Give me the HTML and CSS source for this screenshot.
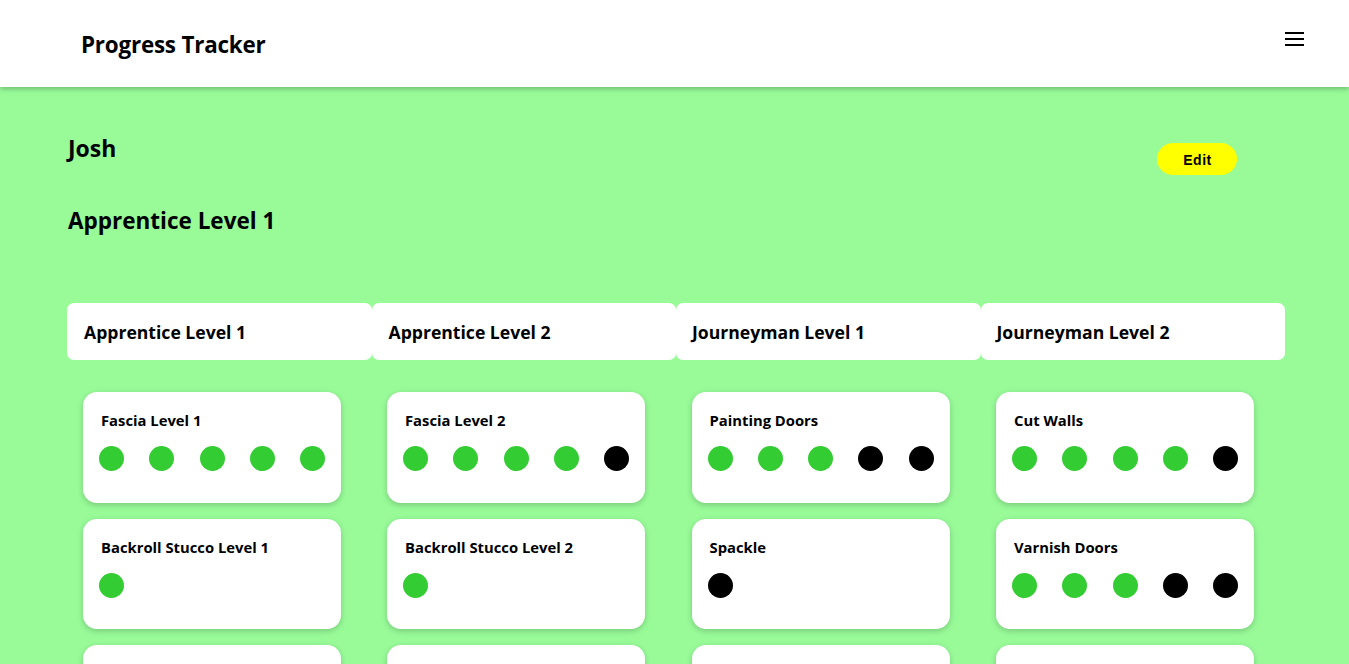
FILE: index.html
```html
<!DOCTYPE html>
<html>
<head>
<meta charset="utf-8">
<link rel="stylesheet" href="styles.css">
</head>
<body>
<header class="topbar">
  <div class="brand">Progress Tracker</div>
  <button class="menu" aria-label="menu">
    <svg width="20" height="16" viewBox="0 0 20 16"><rect x="0" y="1" width="19" height="2" fill="#000"/><rect x="0" y="7" width="19" height="2" fill="#000"/><rect x="0" y="13" width="19" height="2" fill="#000"/></svg>
  </button>
</header>
<main class="page">
  <div class="profile">
    <div class="profile-info">
      <h2 class="name">Josh</h2>
      <h2 class="level">Apprentice Level 1</h2>
    </div>
    <button class="edit">Edit</button>
  </div>
  <div class="tabs">
    <div class="tab">Apprentice Level 1</div>
    <div class="tab">Apprentice Level 2</div>
    <div class="tab">Journeyman Level 1</div>
    <div class="tab">Journeyman Level 2</div>
  </div>
  <div class="columns">
    <div class="column">
      <div class="card"><div class="card-title">Fascia Level 1</div><div class="dots"><span class="dot on"></span><span class="dot on"></span><span class="dot on"></span><span class="dot on"></span><span class="dot on"></span></div></div>
      <div class="card"><div class="card-title">Backroll Stucco Level 1</div><div class="dots"><span class="dot on"></span></div></div>
      <div class="card"><div class="card-title">&nbsp;</div><div class="dots"></div></div>
    </div>
    <div class="column">
      <div class="card"><div class="card-title">Fascia Level 2</div><div class="dots"><span class="dot on"></span><span class="dot on"></span><span class="dot on"></span><span class="dot on"></span><span class="dot"></span></div></div>
      <div class="card"><div class="card-title">Backroll Stucco Level 2</div><div class="dots"><span class="dot on"></span></div></div>
      <div class="card"><div class="card-title">&nbsp;</div><div class="dots"></div></div>
    </div>
    <div class="column">
      <div class="card"><div class="card-title">Painting Doors</div><div class="dots"><span class="dot on"></span><span class="dot on"></span><span class="dot on"></span><span class="dot"></span><span class="dot"></span></div></div>
      <div class="card"><div class="card-title">Spackle</div><div class="dots"><span class="dot"></span></div></div>
      <div class="card"><div class="card-title">&nbsp;</div><div class="dots"></div></div>
    </div>
    <div class="column">
      <div class="card"><div class="card-title">Cut Walls</div><div class="dots"><span class="dot on"></span><span class="dot on"></span><span class="dot on"></span><span class="dot on"></span><span class="dot"></span></div></div>
      <div class="card"><div class="card-title">Varnish Doors</div><div class="dots"><span class="dot on"></span><span class="dot on"></span><span class="dot on"></span><span class="dot"></span><span class="dot"></span></div></div>
      <div class="card"><div class="card-title">&nbsp;</div><div class="dots"></div></div>
    </div>
  </div>
</main>
</body>
</html>
```
FILE: styles.css
```css
* { box-sizing: border-box; }
html, body { margin: 0; padding: 0; }
body {
  background: #98fb98;
  font-family: "Open Sans", "Noto Sans", sans-serif;
  color: #000;
  overflow: hidden;
}
.topbar {
  height: 87px;
  background: #fff;
  display: flex;
  align-items: center;
  justify-content: space-between;
  padding: 0 44px 0 81px;
  box-shadow: 0 2px 5px rgba(0,0,0,0.25);
  position: relative;
  z-index: 1;
}
.brand {
  font-size: 22.4px;
  font-weight: 700;
  letter-spacing: -0.2px;
  margin-top: 2px;
}
.menu {
  background: none;
  border: 0;
  padding: 0;
  margin-top: -10px;
  width: 20px;
  height: 16px;
  display: flex;
}
.page {
  padding: 0 64px 0 67px;
}
.profile {
  display: flex;
  justify-content: space-between;
  align-items: flex-start;
}
.profile-info { padding-left: 1px; }
.name {
  margin: 0;
  padding-top: 47px;
  font-size: 23px;
  line-height: 28px;
  font-weight: 700;
}
.level {
  margin: 0;
  padding-top: 45px;
  font-size: 22.5px;
  line-height: 28px;
  font-weight: 700;
}
.edit {
  margin-top: 56px;
  margin-right: 48px;
  width: 80px;
  height: 32px;
  border: 0;
  border-radius: 16px;
  background: #ffff00;
  font-family: "Liberation Sans", Arial, sans-serif;
  font-weight: 700;
  font-size: 14px;
  letter-spacing: 0.5px;
  color: #000;
  padding: 2px 0 0 1px;
}
.tabs {
  margin-top: 68px;
  display: grid;
  grid-template-columns: repeat(4, 1fr);
}
.tab {
  height: 57px;
  background: #fff;
  border-radius: 7px;
  display: flex;
  align-items: center;
  padding-left: 17px;
  font-size: 17.6px;
  font-weight: 700;
  padding-top: 1px;
}
.tab:nth-child(3), .tab:nth-child(4) { padding-left: 16px; }
.columns {
  margin-top: 32px;
  display: grid;
  grid-template-columns: repeat(4, 1fr);
}
.column {
  display: flex;
  flex-direction: column;
  gap: 16px;
  padding-left: 15.5px;
}
.column:first-child { padding-left: 16px; }
.card {
  width: 258px;
  height: 110.5px;
  background: #fff;
  border-radius: 14px;
  box-shadow: 0 2px 6px rgba(0,0,0,0.2);
  padding: 18px 16px 0 16px;
}
.card-title {
  font-size: 14.8px;
  font-weight: 700;
  line-height: 20px;
  padding-left: 2px;
}
.dots {
  margin-top: 16px;
  display: flex;
  justify-content: space-between;
}
.dot {
  width: 25px;
  height: 25px;
  border-radius: 50%;
  background: #000;
}
.dot.on { background: #33cc33; }
```
